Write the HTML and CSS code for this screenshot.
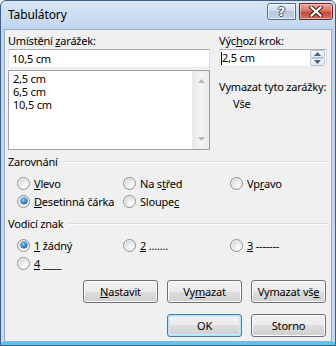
FILE: index.html
```html
<!DOCTYPE html>
<html lang="cs">
<head>
<meta charset="utf-8">
<title>Tabulátory</title>
<link rel="stylesheet" href="styles.css">
</head>
<body>
<div class="window">
  <div class="titlebar">
    <span class="title">Tabulátory</span>
    <div class="caps">
      <div class="cap help"><span class="q">?</span></div>
      <div class="cap close">
        <svg width="14" height="11" viewBox="0 0 14 11">
          <path d="M2.5 1.5 L11.5 9.5 M11.5 1.5 L2.5 9.5" stroke="#4b1a14" stroke-width="4.2" stroke-linecap="square" fill="none"/>
          <path d="M2.5 1.5 L11.5 9.5 M11.5 1.5 L2.5 9.5" stroke="#ffffff" stroke-width="2.2" stroke-linecap="square" fill="none"/>
        </svg>
      </div>
    </div>
  </div>
  <div class="client">
    <div class="top">
      <div class="leftcol">
        <div class="label">Umístění <u>z</u>arážek:</div>
        <div class="textbox">10,5 cm</div>
        <div class="listbox">
          <div class="items">
            <div class="item">2,5 cm</div>
            <div class="item">6,5 cm</div>
            <div class="item">10,5 cm</div>
          </div>
          <div class="vscroll">
            <svg width="7" height="4" viewBox="0 0 7 4"><path d="M0 4 L3.5 0 L7 4Z" fill="#b8b8b8"/></svg>
            <svg width="7" height="4" viewBox="0 0 7 4"><path d="M0 0 L3.5 4 L7 0Z" fill="#b8b8b8"/></svg>
          </div>
        </div>
      </div>
      <div class="rightcol">
        <div class="label">Výc<u>h</u>ozí krok:</div>
        <div class="spin">
          <div class="spintext"><span class="caret"></span>2,5 cm</div>
          <div class="spinbtns">
            <div class="sb"><svg width="7" height="4" viewBox="0 0 7 4"><path d="M0 4 L3.5 0 L7 4Z" fill="#4d6185"/></svg></div>
            <div class="sb"><svg width="7" height="4" viewBox="0 0 7 4"><path d="M0 0 L3.5 4 L7 0Z" fill="#4d6185"/></svg></div>
          </div>
        </div>
        <div class="label clearlabel">Vymazat tyto zarážky:</div>
        <div class="clearval">Vše</div>
      </div>
    </div>

    <div class="grouphead first"><span>Zarovnání</span><div class="rule"></div></div>
    <div class="radios">
      <label class="opt"><span class="radio"></span><span><u>V</u>levo</span></label>
      <label class="opt"><span class="radio"></span><span>Na s<u>t</u>řed</span></label>
      <label class="opt"><span class="radio"></span><span>Vp<u>r</u>avo</span></label>
      <label class="opt"><span class="radio on"></span><span><u>D</u>esetinná čárka</span></label>
      <label class="opt"><span class="radio"></span><span>Sloupe<u>c</u></span></label>
    </div>

    <div class="grouphead second"><span>Vodicí znak</span><div class="rule"></div></div>
    <div class="radios">
      <label class="opt"><span class="radio on"></span><span><u>1</u> žádný</span></label>
      <label class="opt"><span class="radio"></span><span><u>2</u> .......</span></label>
      <label class="opt"><span class="radio"></span><span><u>3</u> -------</span></label>
      <label class="opt"><span class="radio"></span><span><u>4</u> ____</span></label>
    </div>

    <div class="btnrow row1">
      <div class="btn"><u>N</u>astavit</div>
      <div class="btn">Vy<u>m</u>azat</div>
      <div class="btn">Vymazat vš<u>e</u></div>
    </div>
    <div class="btnrow row2">
      <div class="btn default">OK</div>
      <div class="btn">Storno</div>
    </div>
  </div>
</div>
</body>
</html>
```

FILE: styles.css
```css
* { box-sizing: border-box; }

html, body {
  margin: 0;
  padding: 0;
  background: #ffffff;
}

body {
  font-family: "Noto Sans", "Open Sans", sans-serif;
  font-size: 11px;
  letter-spacing: -0.2px;
  color: #000000;
}

u {
  text-decoration: underline;
  text-underline-offset: 1px;
  text-decoration-thickness: 1px;
}

.window {
  width: 336px;
  height: 346px;
  border: 1px solid #3d5f88;
  border-radius: 6px 6px 0 0;
  background: linear-gradient(to bottom, #d7e6f6 0, #c1d6ee 28px, #c3d8ef 100%);
  display: flex;
  flex-direction: column;
  padding: 0 3px 3px 3px;
  box-shadow: inset 0 -3px 0 #5cc6ea;
}

.titlebar {
  height: 28px;
  display: flex;
  align-items: flex-start;
  justify-content: space-between;
  flex: none;
}

.title {
  font-size: 12px;
  letter-spacing: -0.1px;
  padding: 6px 0 0 4px;
  line-height: 16px;
  color: #000000;
}

.caps {
  display: flex;
  gap: 3px;
  margin-top: 2px;
  margin-right: -1px;
}

.cap {
  height: 17px;
  border: 1px solid #55708f;
  display: flex;
  align-items: center;
  justify-content: center;
}

.help {
  width: 29px;
  border-radius: 3px 0 0 3px;
  background: linear-gradient(to bottom, #e6eef8 0, #ccd9ea 50%, #b7c8dd 50%, #c6d4e6 100%);
  box-shadow: inset 0 0 0 1px rgba(255,255,255,0.6);
}

.help .q {
  font-family: "DejaVu Sans", sans-serif;
  font-weight: bold;
  font-size: 13px;
  line-height: 15px;
  color: #ffffff;
  text-shadow: 1px 0 0 #3f4f66, -1px 0 0 #3f4f66, 0 1px 0 #3f4f66, 0 -1px 0 #3f4f66;
}

.close {
  width: 34px;
  border-color: #6e2a22;
  border-radius: 0 3px 3px 0;
  background: linear-gradient(to bottom, #e6a59c 0, #d7776b 45%, #c3493b 55%, #d1735f 100%);
  box-shadow: inset 0 0 0 1px rgba(255,220,210,0.5);
}

.client {
  flex: 1;
  background: #f0f0f0;
  border: 1px solid #94aecb;
  padding: 3px 3px 0 3px;
  display: flex;
  flex-direction: column;
}

.label {
  line-height: 15px;
  height: 15px;
  white-space: nowrap;
}

.top {
  display: flex;
  gap: 9px;
}

.leftcol {
  width: 202px;
  display: flex;
  flex-direction: column;
}

.rightcol {
  width: 108px;
  display: flex;
  flex-direction: column;
}

.textbox {
  margin-top: 1px;
  height: 19px;
  background: #ffffff;
  border: 1px solid #abadb3;
  border-color: #abadb3 #dbdfe6 #e3e9ef #e2e3ea;
  padding: 0 0 0 3px;
  line-height: 17px;
}

.listbox {
  margin-top: 2px;
  height: 80px;
  background: #ffffff;
  border: 1px solid #a0a0a0;
  display: flex;
}

.items {
  flex: 1;
  padding: 1px 0 0 4px;
  display: flex;
  flex-direction: column;
}

.item {
  height: 13px;
  line-height: 13px;
}

.vscroll {
  width: 17px;
  background: linear-gradient(to right, #e9e9e9, #f4f4f4 50%, #e9e9e9);
  border-left: 1px solid #ececec;
  display: flex;
  flex-direction: column;
  justify-content: space-between;
  align-items: center;
  padding: 8px 0 8px 0;
}

.spin {
  margin-top: 1px;
  height: 18px;
  width: 108px;
  background: #ffffff;
  border: 1px solid #abadb3;
  border-color: #abadb3 #dbdfe6 #e3e9ef #e2e3ea;
  display: flex;
}

.spintext {
  flex: 1;
  line-height: 16px;
  padding-left: 1px;
  display: flex;
  align-items: center;
}

.caret {
  width: 1px;
  height: 13px;
  background: #000;
}

.spinbtns {
  width: 16px;
  display: flex;
  flex-direction: column;
  padding: 0 1px 0 0;
}

.sb {
  flex: 1;
  border: 1px solid #b8c4d6;
  border-radius: 2px;
  background: linear-gradient(to bottom, #f5f8fc, #dfe6f0);
  display: flex;
  align-items: center;
  justify-content: center;
}

.clearlabel {
  margin-top: 12px;
}

.clearval {
  margin-top: 2px;
  padding-left: 14px;
  line-height: 15px;
}

.grouphead {
  display: flex;
  align-items: center;
  line-height: 15px;
  height: 15px;
  gap: 6px;
}

.grouphead .rule {
  flex: 1;
  height: 1px;
  background: #d5dfe5;
  box-shadow: 0 1px 0 #ffffff;
}

.grouphead.first { margin-top: 4px; }
.grouphead.second { margin-top: 6px; }

.radios {
  margin-top: 5px;
  display: grid;
  grid-template-columns: 106px 107px 1fr;
  grid-auto-rows: 18px;
  padding-left: 9px;
}

.opt {
  display: flex;
  align-items: center;
  gap: 4px;
  white-space: nowrap;
}

.radio {
  width: 13px;
  height: 13px;
  flex: none;
  border-radius: 50%;
  border: 1px solid #8e8f8f;
  background: radial-gradient(circle at 65% 70%, #ffffff 0, #f0f0f0 30%, #d2d2d2 80%, #c6c6c6 100%);
  box-shadow: inset 0 0 0 1px #f6f6f6;
  position: relative;
}

.radio.on::after {
  content: "";
  position: absolute;
  left: 2.5px;
  top: 2.5px;
  width: 6px;
  height: 6px;
  border-radius: 50%;
  background: radial-gradient(circle at 40% 35%, #a9dcf8 0, #3d9ee3 35%, #0f5aa8 80%, #0b4a8c 100%);
  box-shadow: 0 0 0 0.5px #1f4f82;
}

.btnrow {
  display: flex;
  justify-content: flex-end;
  gap: 9px;
  padding-right: 2px;
}

.row1 { margin-top: 8px; }
.row2 { margin-top: 11px; }

.btn {
  width: 75px;
  height: 23px;
  border: 1px solid #707070;
  border-radius: 3px;
  background: linear-gradient(to bottom, #f2f2f2 0, #ebebeb 50%, #dddddd 50%, #cfcfcf 100%);
  box-shadow: inset 0 0 0 1px #fcfcfc;
  display: flex;
  align-items: center;
  justify-content: center;
  line-height: 15px;
  white-space: nowrap;
}

.btn.default {
  border-color: #3c7fb1;
  box-shadow: inset 0 0 0 1px #48d1ff33, inset 0 0 0 2px #c6ecfb;
}
```
